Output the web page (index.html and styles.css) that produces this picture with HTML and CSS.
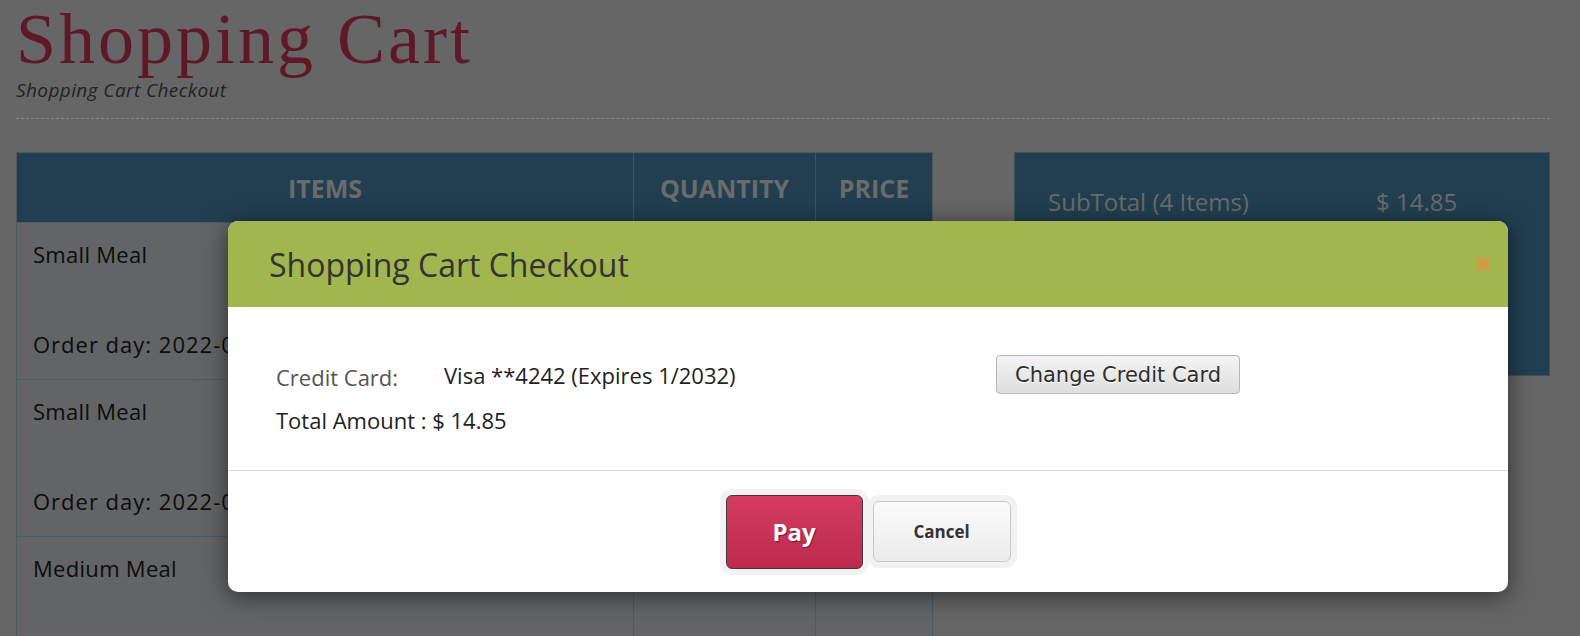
FILE: index.html
```html
<!DOCTYPE html>
<html lang="en">
<head>
<meta charset="utf-8">
<title>Shopping Cart</title>
<link rel="stylesheet" href="styles.css">
</head>
<body>
<div class="page">
  <header class="page-head">
    <h1 class="page-title">Shopping Cart</h1>
    <p class="page-sub">Shopping Cart Checkout</p>
  </header>
  <main class="cart">
    <div class="cart-table">
      <div class="cell head">Items</div>
      <div class="cell head sep">Quantity</div>
      <div class="cell head sep">Price</div>

      <div class="cell item"><p class="name">Small Meal</p><p class="date">Order day: 2022-08-15</p></div>
      <div class="cell num sep">1</div>
      <div class="cell num sep">$ 3.45</div>

      <div class="cell item"><p class="name">Small Meal</p><p class="date">Order day: 2022-08-16</p></div>
      <div class="cell num sep">1</div>
      <div class="cell num sep">$ 3.45</div>

      <div class="cell item"><p class="name">Medium Meal</p></div>
      <div class="cell num sep">1</div>
      <div class="cell num sep">$ 3.95</div>
    </div>
    <aside class="summary">
      <div class="sum-row"><span>SubTotal (4 Items)</span><span>$ 14.85</span></div>
      <div class="sum-row"><span>Tax</span><span>$ 0.00</span></div>
      <div class="sum-row"><span>Total</span><span>$ 14.85</span></div>
    </aside>
  </main>
</div>

<div class="modal" role="dialog">
  <div class="modal-head">
    <h2 class="modal-title">Shopping Cart Checkout</h2>
    <button class="modal-close" aria-label="Close">
      <svg width="14" height="14" viewBox="0 0 14 14"><path d="M2 2 L12 12 M12 2 L2 12" stroke="#e8913c" stroke-width="3.4" stroke-linecap="round" fill="none"/></svg>
    </button>
  </div>
  <div class="modal-body">
    <div class="pay-grid">
      <span class="pay-label">Credit Card:</span>
      <span class="pay-value">Visa **4242 (Expires 1/2032)</span>
      <button class="btn-change">Change Credit Card</button>
      <span class="pay-total">Total Amount : $ 14.85</span>
    </div>
  </div>
  <div class="modal-foot">
    <button class="btn-pay">Pay</button>
    <button class="btn-cancel">Cancel</button>
  </div>
</div>
</body>
</html>
```
FILE: styles.css
```css
html, body {
  height: 100%;
}
body {
  margin: 0;
  background: #666666;
  font-family: "Open Sans", "Liberation Sans", sans-serif;
  color: #0c0c0c;
  overflow: hidden;
}
.page {
  padding: 0 30px 0 16px;
}
.page-head {
  padding: 3px 0 17px;
  border-bottom: 1px dashed #8a8a8a;
}
.page-title {
  margin: 0;
  font-family: "Liberation Serif", serif;
  font-weight: normal;
  font-size: 72px;
  line-height: 72px;
  letter-spacing: 3px;
  color: #5e1828;
}
.page-sub {
  margin: 4px 0 0;
  font-style: italic;
  font-size: 19px;
  line-height: 22px;
  letter-spacing: 0.4px;
  color: #222222;
}
.cart {
  margin-top: 33px;
  display: grid;
  grid-template-columns: 917px 536px;
  column-gap: 81px;
  align-items: start;
}
.cart-table {
  display: grid;
  grid-template-columns: 616px 182px 117px;
  border: 1px solid #4b5a60;
  border-bottom: none;
}
.cell {
  box-sizing: border-box;
}
.cell.sep {
  border-left: 1px solid #4b5c63;
}
.cell.head {
  height: 69px;
  background: #213f51;
  color: #6b6b6b;
  font-weight: 700;
  font-size: 25px;
  text-transform: uppercase;
  display: flex;
  align-items: center;
  justify-content: center;
}
.cell.head.sep {
  border-left-color: #3b5566;
}
.cell.item,
.cell.num {
  height: 157px;
  background: #636466;
  border-top: 1px solid #4b5c63;
  padding: 16px 16px 20px;
  font-size: 22px;
  line-height: 30px;
  letter-spacing: 0.3px;
}
.cell.num {
  text-align: center;
}
.cell p {
  margin: 0;
  white-space: nowrap;
}
.cell .date {
  margin-top: 60px;
  letter-spacing: 1px;
}
.summary {
  box-sizing: border-box;
  height: 224px;
  background: #213f51;
  border: 1px solid #3f525c;
  padding: 33px 33px;
  color: #6b6b6b;
  font-size: 24px;
  line-height: 32px;
}
.sum-row {
  display: grid;
  grid-template-columns: 328px auto;
  margin-bottom: 20px;
}

/* modal */
.modal {
  position: absolute;
  left: 228px;
  top: 221px;
  width: 1280px;
  background: #ffffff;
  border-radius: 10px;
  overflow: hidden;
  box-shadow: 0 4px 24px rgba(0, 0, 0, 0.55);
}
.modal-head {
  height: 86px;
  background: #a1b64f;
  display: flex;
  align-items: center;
  padding: 0 18px 0 41px;
}
.modal-title {
  margin: 0;
  font-weight: 500;
  font-size: 32px;
  color: #333333;
}
.modal-close {
  margin-left: auto;
  padding: 0;
  border: 0;
  background: none;
  width: 14px;
  height: 14px;
  display: flex;
}
.modal-body {
  padding: 48px 48px 35px;
}
.pay-grid {
  display: grid;
  grid-template-columns: 168px 552px auto;
  grid-template-rows: 39px 30px;
  row-gap: 11px;
  align-items: center;
  justify-items: start;
  font-size: 22px;
  line-height: 30px;
}
.pay-label {
  color: #555555;
  padding-top: 4px;
}
.pay-value {
  color: #222222;
}
.pay-total {
  grid-column: 1 / -1;
  color: #222222;
}
.btn-change {
  height: 39px;
  padding: 0 18px;
  font-family: "DejaVu Sans", sans-serif;
  font-size: 21px;
  color: #2e2e2e;
  text-shadow: 0 1px 0 #ffffff;
  background: linear-gradient(#f4f4f4, #dedede);
  border: 1px solid #b7b7b7;
  border-radius: 4px;
}
.modal-foot {
  height: 121px;
  border-top: 1px solid #dddddd;
  display: flex;
  align-items: center;
  justify-content: center;
  gap: 10px;
}
.btn-pay,
.btn-cancel {
  box-sizing: border-box;
  font-family: "Open Sans", sans-serif;
  font-weight: 700;
  border-radius: 6px;
  box-shadow: 0 0 0 6px #f2f2f2;
}
.btn-pay {
  width: 137px;
  height: 74px;
  font-size: 24px;
  color: #ffffff;
  text-shadow: 1px 1px 1px rgba(0, 0, 0, 0.45);
  background: linear-gradient(#d43c60, #bb2a4d);
  border: 1px solid #45383c;
}
.btn-cancel {
  width: 138px;
  height: 61px;
  font-size: 17px;
  color: #333333;
  background: linear-gradient(#fbfbfb, #ebebeb);
  border: 1px solid #c8c8c8;
}
```
